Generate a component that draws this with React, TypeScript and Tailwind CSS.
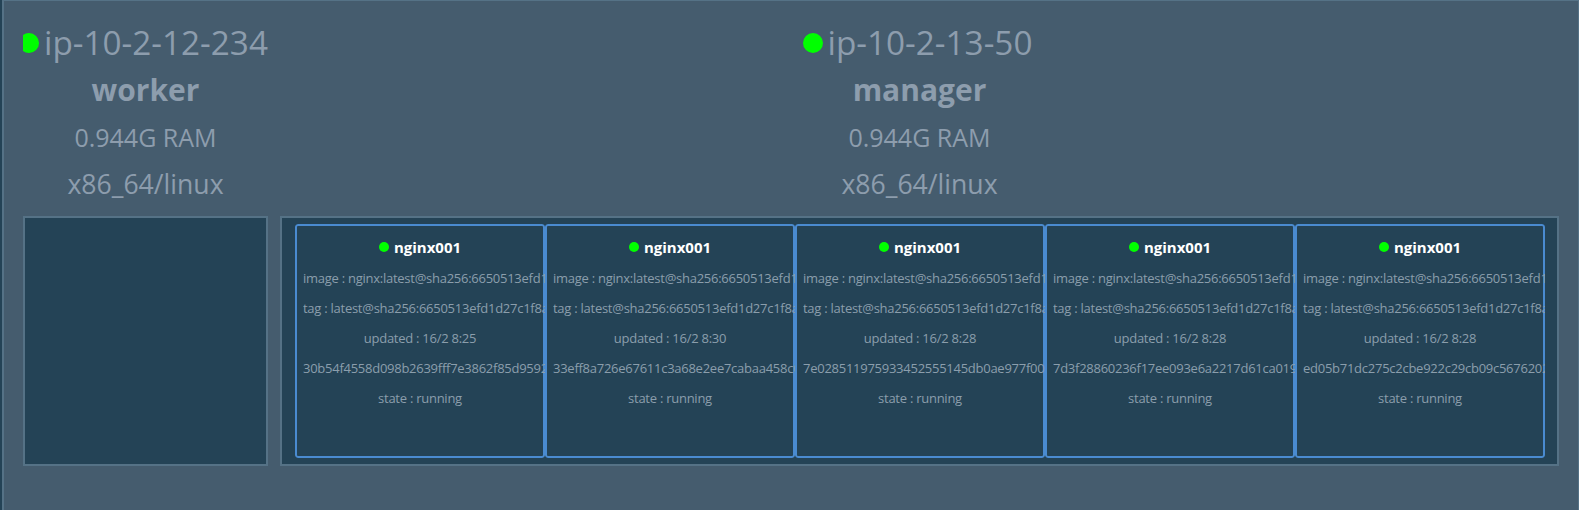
const containers = [
  { updated: "16/2 8:25", id: "30b54f4558d098b2639fff7e3862f85d9592" },
  { updated: "16/2 8:30", id: "33eff8a726e67611c3a68e2ee7cabaa458c0" },
  { updated: "16/2 8:28", id: "7e028511975933452555145db0ae977f00" },
  { updated: "16/2 8:28", id: "7d3f28860236f17ee093e6a2217d61ca019" },
  { updated: "16/2 8:28", id: "ed05b71dc275c2cbe922c29cb09c5676202" },
];

type NodeInfoProps = { name: string; role: string; clipped?: boolean };

function NodeInfo({ name, role, clipped }: NodeInfoProps) {
  return (
    <div className="flex flex-col items-center whitespace-nowrap text-[#8d9dad]">
      <div className={clipped ? "flex h-[45px] w-full items-center gap-[5px] text-[33.3px]" : "flex h-[45px] items-center gap-[5px] pr-[4px] text-[33.3px]"}>
        <span className={clipped ? "h-5 w-4 shrink-0 overflow-hidden" : "h-5 w-5 shrink-0"}>
          <span className={clipped ? "-ml-1 block size-5 rounded-full bg-[#00ff00]" : "block size-5 rounded-full bg-[#00ff00]"} />
        </span>
        <span>{name}</span>
      </div>
      <div className="flex h-[48px] items-center text-[30px] font-bold">{role}</div>
      <div className="flex h-[50px] items-center text-[25px]">0.944G RAM</div>
      <div className="flex h-[44px] items-center text-[26.6px]">x86_64/linux</div>
    </div>
  );
}

function Container({ updated, id }: { updated: string; id: string }) {
  return (
    <div className="relative h-[234px] w-[250px] shrink-0 overflow-hidden rounded-[3px] p-2 text-center text-[13px] leading-[30px] tracking-[-0.26px] whitespace-nowrap text-[#8b9eac]">
      <div className="pointer-events-none absolute inset-0 rounded-[3px] border-2 border-[#4a8bd0]" />
      <div className="mb-px flex items-center justify-center gap-[5px] text-[15px] font-bold tracking-normal text-white">
        <span className="size-[10px] rounded-full bg-[#00ff00]" />
        nginx001
      </div>
      <div className="relative -mr-2 overflow-hidden text-left">image : nginx:latest@sha256:6650513efd1</div>
      <div className="relative -mr-2 overflow-hidden text-left">tag : latest@sha256:6650513efd1d27c1f8a</div>
      <div>updated : {updated}</div>
      <div className="relative -mr-2 overflow-hidden text-left">{id}</div>
      <div>state : running</div>
    </div>
  );
}

export default function App() {
  return (
    <div className="h-[510px] w-[1579px] overflow-hidden bg-[#244356] pl-[2px] font-['Open_Sans',sans-serif]">
      <div className="flex h-full gap-3 border-t border-r border-l-2 border-[#557286] bg-[#455c6e] pt-[19px] pl-[19px]">
        <section className="w-[245px] shrink-0">
          <NodeInfo name="ip-10-2-12-234" role="worker" clipped />
          <div className="mt-[9px] h-[250px] border-2 border-[#557286] bg-[#244356]" />
        </section>
        <section className="w-[1279px] shrink-0">
          <NodeInfo name="ip-10-2-13-50" role="manager" />
          <div className="mt-[9px] flex h-[250px] border-2 border-[#557286] bg-[#244356] px-[13px] py-[6px]">
            {containers.map((c) => (
              <Container key={c.id} {...c} />
            ))}
          </div>
        </section>
      </div>
    </div>
  );
}
